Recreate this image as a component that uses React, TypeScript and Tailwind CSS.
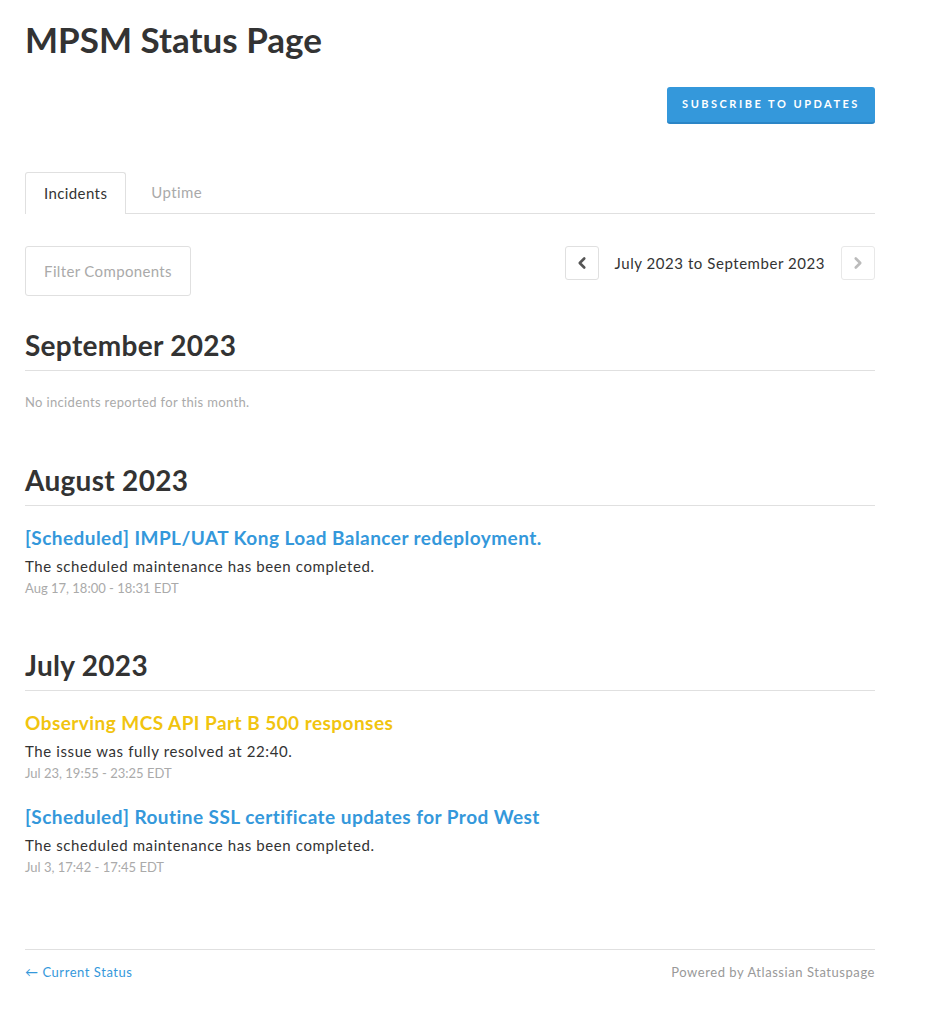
import React from 'react';
import { ChevronLeft, ChevronRight } from 'lucide-react';

interface Incident {
  title: string;
  message: string;
  date: string;
  tone: 'blue' | 'yellow';
}

interface Month {
  name: string;
  incidents: Incident[];
}

const months: Month[] = [
  { name: 'September 2023', incidents: [] },
  {
    name: 'August 2023',
    incidents: [
      {
        title: '[Scheduled] IMPL/UAT Kong Load Balancer redeployment.',
        message: 'The scheduled maintenance has been completed.',
        date: 'Aug 17, 18:00 - 18:31 EDT',
        tone: 'blue',
      },
    ],
  },
  {
    name: 'July 2023',
    incidents: [
      {
        title: 'Observing MCS API Part B 500 responses',
        message: 'The issue was fully resolved at 22:40.',
        date: 'Jul 23, 19:55 - 23:25 EDT',
        tone: 'yellow',
      },
      {
        title: '[Scheduled] Routine SSL certificate updates for Prod West',
        message: 'The scheduled maintenance has been completed.',
        date: 'Jul 3, 17:42 - 17:45 EDT',
        tone: 'blue',
      },
    ],
  },
];

const MonthBlock: React.FC<{ month: Month; first: boolean }> = ({ month, first }) => (
  <div className={first ? 'mt-[33px]' : 'mt-[52px]'}>
    <h2 className="text-[28px] font-bold leading-[32px] tracking-[0.3px] pb-[9px] border-b border-[#e0e0e0] text-[#333]">
      {month.name}
    </h2>
    {month.incidents.length === 0 ? (
      <p className="mt-[21px] text-[13px] leading-[20px] tracking-[0.35px] text-[#aaa]">
        No incidents reported for this month.
      </p>
    ) : (
      month.incidents.map((inc, i) => (
        <div key={i} className={i === 0 ? 'mt-[19px]' : 'mt-[22px]'}>
          <a
            href="#"
            className={
              'block text-[19px] font-bold leading-[26px] tracking-[0.45px] ' +
              (inc.tone === 'yellow' ? 'text-[#f1c40f]' : 'text-[#3498db]')
            }
          >
            {inc.title}
          </a>
          <p className="mt-[4px] text-[15px] leading-[22px] tracking-[0.6px] text-[#333]">{inc.message}</p>
          <p className="mt-[2px] text-[13px] leading-[18px] text-[#aaa]">{inc.date}</p>
        </div>
      ))
    )}
  </div>
);

export default function App() {
  return (
    <div className="min-h-screen bg-white font-['Lato','Liberation_Sans',sans-serif]">
      <div className="w-[850px] ml-[25px] pt-[19px] pb-[40px]">
        <h1 className="text-[35px] font-bold leading-[40px] text-[#333]">MPSM Status Page</h1>

        <div className="flex justify-end mt-[28px]">
          <button className="h-[37px] w-[208px] rounded-[3px] bg-[#3498db] border-b-2 border-[#2a85c6] text-white text-[11px] font-bold tracking-[2.5px] uppercase">
            Subscribe to Updates
          </button>
        </div>

        {/* Tabs */}
        <div className="mt-[48px] flex border-b border-[#e0e0e0] h-[42px]">
          <div className="h-[42px] -mb-px px-[18px] border border-b-0 border-[#e0e0e0] rounded-t-[3px] bg-white flex items-center text-[15px] tracking-[0.4px] text-[#333]">
            Incidents
          </div>
          <div className="h-[41px] px-[25px] flex items-center text-[15px] tracking-[0.4px] text-[#aaa]">Uptime</div>
        </div>

        {/* Filter + pagination */}
        <div className="mt-[32px] flex justify-between items-start">
          <button className="h-[50px] w-[166px] border border-[#e0e0e0] rounded-[3px] text-[15px] tracking-[0.35px] text-[#aaa]">
            Filter Components
          </button>
          <div className="flex items-center h-[34px]">
            <div className="w-[34px] h-[34px] border border-[#e0e0e0] rounded-[3px] flex items-center justify-center">
              <ChevronLeft size={18} strokeWidth={3.5} className="text-[#555]" />
            </div>
            <span className="px-[16px] text-[15px] tracking-[0.55px] text-[#333]">July 2023 to September 2023</span>
            <div className="w-[34px] h-[34px] border border-[#e8e8e8] rounded-[3px] flex items-center justify-center">
              <ChevronRight size={18} strokeWidth={3.5} className="text-[#bbb]" />
            </div>
          </div>
        </div>

        {months.map((m, i) => (
          <MonthBlock key={m.name} month={m} first={i === 0} />
        ))}

        {/* Footer */}
        <div className="mt-[73px] border-t border-[#e0e0e0] pt-[12px] flex justify-between text-[13px] leading-[20px] tracking-[0.55px]">
          <a href="#" className="text-[#3498db]">← Current Status</a>
          <span className="text-[#999]">Powered by Atlassian Statuspage</span>
        </div>
      </div>
    </div>
  );
}
